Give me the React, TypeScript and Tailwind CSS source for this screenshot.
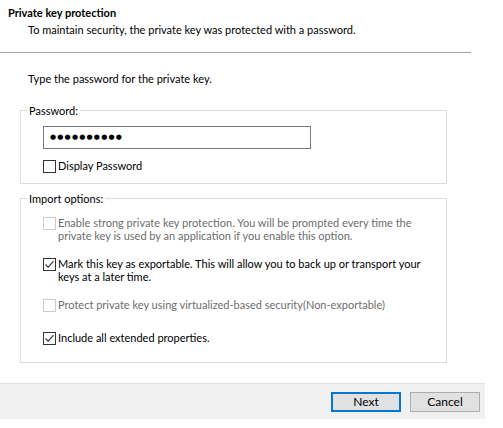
import React from "react";

const FONT = { fontFamily: 'Lato, "Noto Sans", sans-serif' };

function Check({ checked = false, disabled = false }: { checked?: boolean; disabled?: boolean }) {
  return (
    <span
      className={
        "mt-[1px] flex h-[13px] w-[13px] shrink-0 items-center justify-center border bg-white " +
        (disabled ? "border-[#cccccc]" : "border-[#333333]")
      }
    >
      {checked && (
        <svg width="11" height="11" viewBox="0 0 11 11">
          <polyline points="1.5,5.5 4.2,8.2 9.5,2.2" fill="none" stroke="#333333" strokeWidth="1.1" />
        </svg>
      )}
    </span>
  );
}

function Option({ checked, disabled, children }: { checked?: boolean; disabled?: boolean; children: React.ReactNode }) {
  return (
    <div className="flex items-start gap-[2px]">
      <Check checked={checked} disabled={disabled} />
      <p className={disabled ? "text-[#6d6d6d]" : "text-black"}>{children}</p>
    </div>
  );
}

export default function App() {
  return (
    <div className="h-[428px] w-[503px] bg-white text-[11px] leading-[13px] text-black" style={FONT}>
      <div className="w-[485px]">
        {/* Header */}
        <div className="pl-2 pt-[6px]">
          <p className="font-bold">Private key protection</p>
          <p className="mt-[4px] pl-5">To maintain security, the private key was protected with a password.</p>
        </div>
        <div className="mt-[16px] h-px w-[471px] bg-[#a0a0a0]" />

        <div className="pl-5 pr-[38px]">
          <p className="mt-[19px] pl-2">Type the password for the private key.</p>

          {/* Password group */}
          <fieldset className="mt-[19px] border border-[#dcdcdc] pb-[10px]">
            <legend className="ml-[6px] px-[2px]">Password:</legend>
            <div className="pl-[22px]">
              <div className="mt-[9px] flex h-[23px] w-[268px] items-center border border-[#7a7a7a] pl-[6px]">
                <span className="text-[7px] tracking-[1.2px]" style={{ fontFamily: '"DejaVu Sans", sans-serif' }}>
                  ●●●●●●●●●●
                </span>
              </div>
              <div className="mt-[10px]">
                <Option>Display Password</Option>
              </div>
            </div>
          </fieldset>

          {/* Import options */}
          <fieldset className="mt-[8px] border border-[#dcdcdc] pb-[17px]">
            <legend className="ml-[6px] px-[2px]">Import options:</legend>
            <div className="pl-[22px] pr-[16px] pt-[11px]">
              <Option disabled>
                Enable strong private key protection. You will be prompted every time the private key is used by an
                application if you enable this option.
              </Option>
              <div className="mt-[15px]">
                <Option checked>
                  Mark this key as exportable. This will allow you to back up or transport your keys at a later time.
                </Option>
              </div>
              <div className="mt-[15px]">
                <Option disabled>Protect private key using virtualized-based security(Non-exportable)</Option>
              </div>
              <div className="mt-[19px]">
                <Option checked>Include all extended properties.</Option>
              </div>
            </div>
          </fieldset>
        </div>

        {/* Footer */}
        <div className="mt-[20px] flex h-[36px] items-center justify-end gap-[9px] border-t border-[#dfdfdf] bg-[#f0f0f0] pr-[5px] pt-[1px]">
          <button className="h-[20px] w-[70px] border-2 border-[#0078d7] bg-[#e1e1e1] text-[12px] leading-none">
            Next
          </button>
          <button className="h-[20px] w-[70px] border border-[#adadad] bg-[#e1e1e1] text-[12px] leading-none">
            Cancel
          </button>
        </div>
      </div>
    </div>
  );
}
